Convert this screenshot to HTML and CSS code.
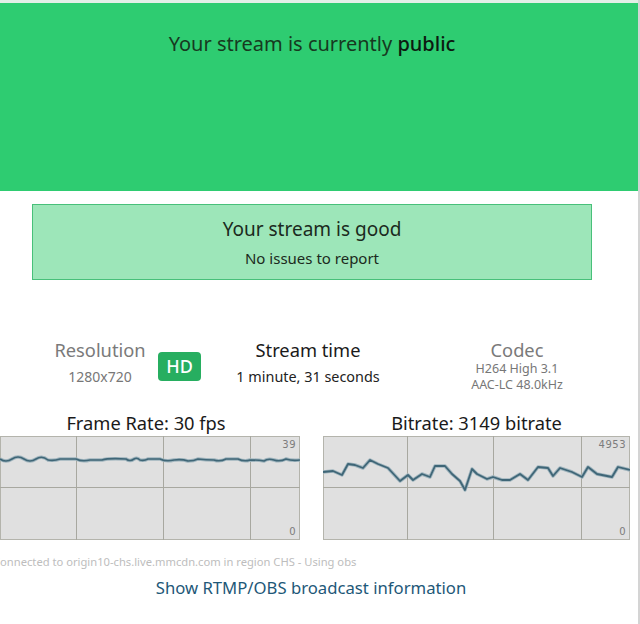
FILE: index.html
```html
<!DOCTYPE html>
<html>
<head>
<meta charset="utf-8">
<link rel="stylesheet" href="styles.css">
</head>
<body>
<div class="panel">
  <div class="topline"></div>
  <header class="status-band">
    <p class="status-text">Your stream is currently <strong>public</strong></p>
  </header>
  <section class="health">
    <h2 class="health-title">Your stream is good</h2>
    <p class="health-sub">No issues to report</p>
  </section>
  <section class="stats">
    <div class="stat stat-res">
      <div class="stat-label muted">Resolution</div>
      <div class="stat-value muted">1280x720</div>
    </div>
    <div class="badge">HD</div>
    <div class="stat stat-time">
      <div class="stat-label">Stream time</div>
      <div class="stat-value dark">1 minute, 31 seconds</div>
    </div>
    <div class="stat stat-codec">
      <div class="stat-label muted">Codec</div>
      <div class="codec-line">H264 High 3.1</div>
      <div class="codec-line">AAC-LC 48.0kHz</div>
    </div>
  </section>
  <section class="charts">
    <div class="chart-col chart-left">
      <div class="chart-title">Frame Rate: 30 fps</div>
      <div class="chart">
        <svg width="300" height="104" viewBox="0 0 300 104">
          <rect x="0.5" y="0.5" width="299" height="103" fill="#e0e0e0" stroke="#b4b4ac"/>
          <line x1="76.5" y1="0" x2="76.5" y2="104" stroke="#a8a8a0"/>
          <line x1="163.5" y1="0" x2="163.5" y2="104" stroke="#a8a8a0"/>
          <line x1="250.5" y1="0" x2="250.5" y2="104" stroke="#a8a8a0"/>
          <line x1="0" y1="51.5" x2="300" y2="51.5" stroke="#a8a8a0"/>
          <path fill="none" stroke="#9fb4bd" stroke-width="3.5" d="M0,23 Q6,27 12,23 T24,23 T36,23 T48,24 Q54,25 60,23 L76,23 Q82,26 90,24 L102,24 Q108,22 126,23 Q130,26 134,23 Q137,21 140,24 Q144,25 148,23 L160,23 Q166,26 174,24 Q182,23 188,25 Q194,25 198,23 Q206,24 214,24 Q220,26 226,23 L238,23 Q244,26 250,24 Q258,24 264,25 Q268,22 274,24 Q280,26 286,23 Q292,25 300,24"/>
          <path fill="none" stroke="#3f6677" stroke-width="1.6" d="M0,23 Q6,27 12,23 T24,23 T36,23 T48,24 Q54,25 60,23 L76,23 Q82,26 90,24 L102,24 Q108,22 126,23 Q130,26 134,23 Q137,21 140,24 Q144,25 148,23 L160,23 Q166,26 174,24 Q182,23 188,25 Q194,25 198,23 Q206,24 214,24 Q220,26 226,23 L238,23 Q244,26 250,24 Q258,24 264,25 Q268,22 274,24 Q280,26 286,23 Q292,25 300,24"/>
        </svg>
        <span class="axis axis-max">39</span>
        <span class="axis axis-min">0</span>
      </div>
    </div>
    <div class="chart-col chart-right">
      <div class="chart-title">Bitrate: 3149 bitrate</div>
      <div class="chart">
        <svg width="307" height="104" viewBox="0 0 307 104">
          <rect x="0.5" y="0.5" width="306" height="103" fill="#e0e0e0" stroke="#b4b4ac"/>
          <line x1="84.5" y1="0" x2="84.5" y2="104" stroke="#a8a8a0"/>
          <line x1="170.5" y1="0" x2="170.5" y2="104" stroke="#a8a8a0"/>
          <line x1="258.5" y1="0" x2="258.5" y2="104" stroke="#a8a8a0"/>
          <line x1="0" y1="51.5" x2="307" y2="51.5" stroke="#a8a8a0"/>
          <polyline fill="none" stroke="#9fb4bd" stroke-width="3.5" stroke-linejoin="round" points="0,36 10,35 19,39 25,28 32,29 40,32 47,24 55,28 65,32 77,45 85,39 90,44 99,38 107,41 112,30 122,30 129,38 137,45 142,54 149,33 154,38 164,43 170,41 179,44 187,44 197,38 205,44 215,31 225,32 230,40 237,32 249,36 259,41 265,31 274,38 289,41 295,31 307,34"/>
          <polyline fill="none" stroke="#3f6677" stroke-width="1.8" stroke-linejoin="round" points="0,36 10,35 19,39 25,28 32,29 40,32 47,24 55,28 65,32 77,45 85,39 90,44 99,38 107,41 112,30 122,30 129,38 137,45 142,54 149,33 154,38 164,43 170,41 179,44 187,44 197,38 205,44 215,31 225,32 230,40 237,32 249,36 259,41 265,31 274,38 289,41 295,31 307,34"/>
        </svg>
        <span class="axis axis-max">4953</span>
        <span class="axis axis-min">0</span>
      </div>
    </div>
  </section>
  <p class="conn">Connected to origin10-chs.live.mmcdn.com in region CHS - Using obs</p>
  <p class="rtmp"><a class="rtmp-link">Show RTMP/OBS broadcast information</a></p>
</div>
</body>
</html>
```

FILE: styles.css
```css
* { box-sizing: border-box; }
html, body { margin: 0; padding: 0; background: #fff; }
body {
  font-family: "Noto Sans", "Open Sans", sans-serif;
  color: #222;
  overflow: hidden;
}
.panel {
  width: 640px;
  height: 624px;
  border-right: 2px solid #d4d4d4;
  overflow: hidden;
}
.topline { height: 3px; background: #e3efe7; }
.status-band {
  height: 188px;
  background: #2ecc71;
  padding: 29px 14px 0 0;
}
.status-text {
  margin: 0;
  text-align: center;
  font-size: 20px;
  line-height: 24px;
  color: #17391f;
}
.status-text strong { font-weight: 500; color: #0c1a10; }
.health {
  margin: 13px 0 0 32px;
  width: 560px;
  height: 76px;
  background: #9de6b9;
  border: 1px solid #48c07a;
  padding-top: 12px;
  text-align: center;
}
.health-title {
  margin: 0;
  font-size: 19px;
  font-weight: 400;
  line-height: 24px;
  color: #1b2a20;
}
.health-sub {
  margin: 7px 0 0;
  font-size: 15px;
  line-height: 20px;
  color: #1b2a20;
}
.stats {
  display: flex;
  align-items: flex-start;
  margin-top: 59px;
  padding-left: 42px;
}
.stat { text-align: center; }
.stat-res { width: 116px; }
.stat-time { width: 214px; }
.stat-codec { width: 204px; }
.stat-label { font-size: 18.3px; line-height: 22px; color: #1a1a1a; }
.stat-label.muted { color: #7a7a7a; }
.stat-value { font-size: 14px; line-height: 17px; margin-top: 7px; }
.stat-value.muted { color: #777; }
.stat-value.dark { color: #222; font-size: 14.4px; }
.codec-line { font-size: 12.5px; line-height: 16px; color: #777; }
.badge {
  margin-top: 13px;
  width: 43px;
  height: 29px;
  background: #27ae60;
  border-radius: 4px;
  color: #fff;
  font-family: "Noto Sans", sans-serif;
  font-weight: 500;
  font-size: 18px;
  line-height: 29px;
  text-align: center;
}
.charts {
  display: flex;
  gap: 23px;
  margin-top: 19px;
}
.chart-left { width: 300px; }
.chart-right { width: 307px; }
.chart-title {
  text-align: center;
  font-size: 18.3px;
  line-height: 22px;
  height: 24px;
  color: #1a1a1a;
}
.chart-left .chart-title { padding-right: 8px; }
.chart { position: relative; height: 104px; }
.chart svg { display: block; }
.axis {
  position: absolute;
  right: 4px;
  font-family: "DejaVu Sans", sans-serif;
  font-size: 10px;
  letter-spacing: 0.5px;
  line-height: 12px;
  color: #7c7c7c;
}
.axis-max { top: 3px; }
.axis-min { bottom: 2px; }
.conn {
  margin: 15px 0 0;
  text-indent: -7px;
  font-size: 11.2px;
  line-height: 14px;
  color: #bdbdbd;
  white-space: nowrap;
}
.rtmp {
  margin: 8px 0 0;
  text-align: center;
  font-size: 16.7px;
  line-height: 22px;
  padding-right: 16px;
}
.rtmp-link { color: #1e5878; text-decoration: none; }
```
